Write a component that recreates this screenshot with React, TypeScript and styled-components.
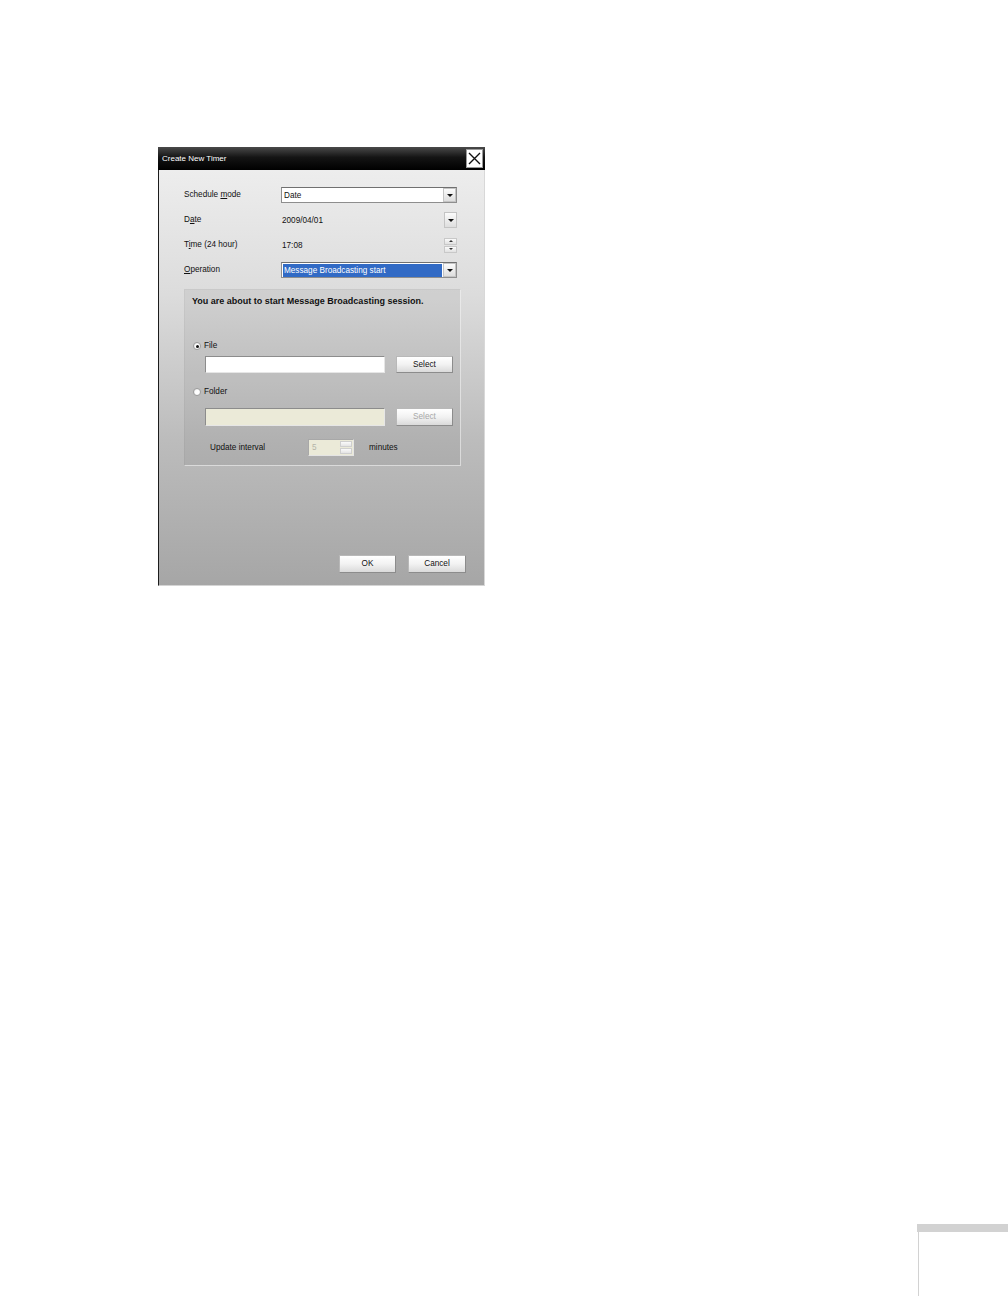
import styled, { createGlobalStyle } from "styled-components";

const GlobalStyle = createGlobalStyle`
  html, body {
    margin: 0;
    padding: 0;
    background: #ffffff;
  }
  body {
    font-family: "Liberation Sans", Arial, sans-serif;
  }
`;

const Page = styled.div`
  width: 1008px;
  height: 1296px;
  display: flex;
  flex-direction: column;
  box-sizing: border-box;
  padding-top: 147px;
  overflow: hidden;
`;

const Dialog = styled.div`
  margin-left: 158px;
  width: 327px;
  height: 439px;
  display: flex;
  flex-direction: column;
  box-sizing: border-box;
`;

const TitleBar = styled.div`
  height: 23px;
  display: flex;
  align-items: center;
  justify-content: space-between;
  padding: 0 2px 0 4px;
  background: linear-gradient(#4a4a4a, #141414 45%, #000);
  color: #fff;
  font-size: 8px;
  flex-shrink: 0;
`;

const CloseBox = styled.div`
  width: 17px;
  height: 19px;
  background: #fff;
  border: 1px solid #9a9a9a;
  box-sizing: border-box;
  display: flex;
  align-items: center;
  justify-content: center;
`;

const Body = styled.div`
  flex: 1;
  display: flex;
  flex-direction: column;
  border-left: 1px solid #1c1c1c;
  border-right: 1px solid #d8d8d8;
  border-bottom: 1px solid #d4d4d4;
  background: linear-gradient(#ededed, #dcdcdc 30%, #bcbcbc 65%, #a6a6a6);
  padding: 17px 0 0 25px;
  font-size: 8.2px;
  color: #111;
`;

const FormGrid = styled.div`
  display: grid;
  grid-template-columns: 97px 176px;
  grid-auto-rows: 16px;
  row-gap: 9px;
  align-items: center;
`;

const Label = styled.div`
  line-height: 10px;
  u {
    text-decoration: underline;
  }
`;

const Field = styled.div<{ $boxed?: boolean }>`
  height: 16px;
  display: flex;
  align-items: center;
  justify-content: space-between;
  box-sizing: border-box;
  ${(p) =>
    p.$boxed
      ? `background:#fff;border:1px solid #8e8e8e;border-top-color:#707070;padding:0 0 0 1px;`
      : `padding:0;`}
`;

const FieldText = styled.span<{ $selected?: boolean }>`
  flex: 1;
  height: 13px;
  line-height: 13px;
  padding-left: 1px;
  margin-right: 1px;
  ${(p) => (p.$selected ? `background:#316ac5;color:#fff;` : ``)}
`;

const DropBtn = styled.div<{ $h?: number }>`
  width: 13px;
  height: ${(p) => p.$h ?? 14}px;
  box-sizing: border-box;
  border: 1px solid #c4c4c4;
  background: linear-gradient(#fbfbfb, #dedede);
  display: flex;
  align-items: center;
  justify-content: center;
  flex-shrink: 0;
  &::after {
    content: "";
    border-left: 3px solid transparent;
    border-right: 3px solid transparent;
    border-top: 3px solid #111;
  }
`;

const SpinCol = styled.div`
  display: flex;
  flex-direction: column;
  gap: 1px;
  width: 13px;
  flex-shrink: 0;
`;

const SpinHalf = styled.div<{ $up?: boolean }>`
  height: 7px;
  box-sizing: border-box;
  border: 1px solid #c8c8c8;
  background: linear-gradient(#fbfbfb, #e0e0e0);
  display: flex;
  align-items: center;
  justify-content: center;
  &::after {
    content: "";
    border-left: 2px solid transparent;
    border-right: 2px solid transparent;
    ${(p) =>
      p.$up ? `border-bottom:2px solid #333;` : `border-top:2px solid #333;`}
  }
`;

const Panel = styled.div`
  margin-top: 11px;
  width: 277px;
  height: 177px;
  box-sizing: border-box;
  background: rgba(0, 0, 0, 0.055);
  border: 1px solid rgba(255, 255, 255, 0.55);
  border-top-color: rgba(0, 0, 0, 0.03);
  border-left-color: rgba(0, 0, 0, 0.03);
  padding: 6px 0 0 0;
  display: flex;
  flex-direction: column;
`;

const Heading = styled.div`
  font-weight: bold;
  font-size: 9px;
  line-height: 10px;
  padding-left: 7px;
  margin-bottom: 35px;
`;

const RadioRow = styled.div<{ $top?: number }>`
  display: flex;
  align-items: center;
  gap: 3px;
  padding-left: 8px;
  height: 10px;
  line-height: 10px;
  margin-top: ${(p) => p.$top ?? 0}px;
`;

const Radio = styled.span<{ $checked?: boolean }>`
  width: 8px;
  height: 8px;
  border-radius: 50%;
  box-sizing: border-box;
  border: 1px solid #9c9c9c;
  background: radial-gradient(circle at 60% 60%, #fff 40%, #e2e2e2);
  display: flex;
  align-items: center;
  justify-content: center;
  &::after {
    content: "";
    width: 3px;
    height: 3px;
    border-radius: 50%;
    background: ${(p) => (p.$checked ? "#111" : "transparent")};
  }
`;

const InputRow = styled.div<{ $top: number }>`
  display: flex;
  align-items: center;
  gap: 11px;
  padding-left: 20px;
  margin-top: ${(p) => p.$top}px;
`;

const TextInput = styled.div<{ $disabled?: boolean }>`
  width: 180px;
  height: ${(p) => (p.$disabled ? 18 : 17)}px;
  box-sizing: border-box;
  border: 1px solid #8c8c8c;
  border-right-color: #e6e6e6;
  border-bottom-color: #e6e6e6;
  background: ${(p) => (p.$disabled ? "#ebead8" : "#ffffff")};
`;

const Button = styled.div<{ $disabled?: boolean; $h?: number; $w?: number }>`
  width: ${(p) => p.$w ?? 57}px;
  height: ${(p) => p.$h ?? 17}px;
  box-sizing: border-box;
  border: 1px solid #b8b8b8;
  border-right-color: #8c8c8c;
  border-bottom-color: #8c8c8c;
  background: linear-gradient(#ffffff, #f2f2f2 50%, #dadada);
  display: flex;
  align-items: center;
  justify-content: center;
  color: ${(p) => (p.$disabled ? "#a8a8a8" : "#111")};
  line-height: 10px;
`;

const IntervalRow = styled.div`
  display: flex;
  align-items: center;
  padding-left: 25px;
  margin-top: 13px;
  height: 17px;
`;

const IntervalLabel = styled.span`
  width: 98px;
`;

const NumBox = styled.div`
  width: 46px;
  height: 17px;
  box-sizing: border-box;
  border: 1px solid #a8a8a8;
  border-right-color: #e4e4e4;
  border-bottom-color: #e4e4e4;
  background: #ebead8;
  display: flex;
  align-items: center;
  justify-content: space-between;
  padding: 0 1px 0 3px;
  color: #b4b4a8;
  margin-right: 15px;
`;

const NumSpin = styled.div`
  display: flex;
  flex-direction: column;
  gap: 1px;
  width: 12px;
  div {
    height: 6px;
    border: 1px solid #cfcfcf;
    background: linear-gradient(#fafafa, #e4e4e4);
    box-sizing: border-box;
  }
`;

const Footer = styled.div`
  margin-top: auto;
  display: flex;
  justify-content: flex-end;
  gap: 12px;
  padding: 0 18px 12px 0;
`;

const PageTab = styled.div`
  margin-top: auto;
  margin-left: 917px;
  height: 72px;
  display: flex;
  flex-direction: column;
`;

const TabBar = styled.div`
  height: 8px;
  background: #d2d2d2;
`;

const TabLine = styled.div`
  flex: 1;
  width: 1px;
  margin-left: 1px;
  background: #d2d2d2;
`;

export default function App() {
  return (
    <>
      <GlobalStyle />
      <Page>
        <Dialog>
          <TitleBar>
            <span>Create New Timer</span>
            <CloseBox>
              <svg width="13" height="13" viewBox="0 0 13 13">
                <path d="M1 1 L12 12 M12 1 L1 12" stroke="#111" strokeWidth="1.4" />
              </svg>
            </CloseBox>
          </TitleBar>
          <Body>
            <FormGrid>
              <Label>
                Schedule <u>m</u>ode
              </Label>
              <Field $boxed>
                <FieldText>Date</FieldText>
                <DropBtn />
              </Field>
              <Label>
                D<u>a</u>te
              </Label>
              <Field>
                <FieldText>2009/04/01</FieldText>
                <DropBtn $h={16} />
              </Field>
              <Label>
                T<u>i</u>me (24 hour)
              </Label>
              <Field>
                <FieldText>17:08</FieldText>
                <SpinCol>
                  <SpinHalf $up />
                  <SpinHalf />
                </SpinCol>
              </Field>
              <Label>
                <u>O</u>peration
              </Label>
              <Field $boxed>
                <FieldText $selected>Message Broadcasting start</FieldText>
                <DropBtn />
              </Field>
            </FormGrid>
            <Panel>
              <Heading>You are about to start Message Broadcasting session.</Heading>
              <RadioRow>
                <Radio $checked />
                <span>File</span>
              </RadioRow>
              <InputRow $top={5}>
                <TextInput />
                <Button>Select</Button>
              </InputRow>
              <RadioRow $top={14}>
                <Radio />
                <span>Folder</span>
              </RadioRow>
              <InputRow $top={11}>
                <TextInput $disabled />
                <Button $disabled $h={18}>
                  Select
                </Button>
              </InputRow>
              <IntervalRow>
                <IntervalLabel>Update interval</IntervalLabel>
                <NumBox>
                  <span>5</span>
                  <NumSpin>
                    <div />
                    <div />
                  </NumSpin>
                </NumBox>
                <span>minutes</span>
              </IntervalRow>
            </Panel>
            <Footer>
              <Button $h={18}>OK</Button>
              <Button $h={18} $w={58}>
                Cancel
              </Button>
            </Footer>
          </Body>
        </Dialog>
        <PageTab>
          <TabBar />
          <TabLine />
        </PageTab>
      </Page>
    </>
  );
}
